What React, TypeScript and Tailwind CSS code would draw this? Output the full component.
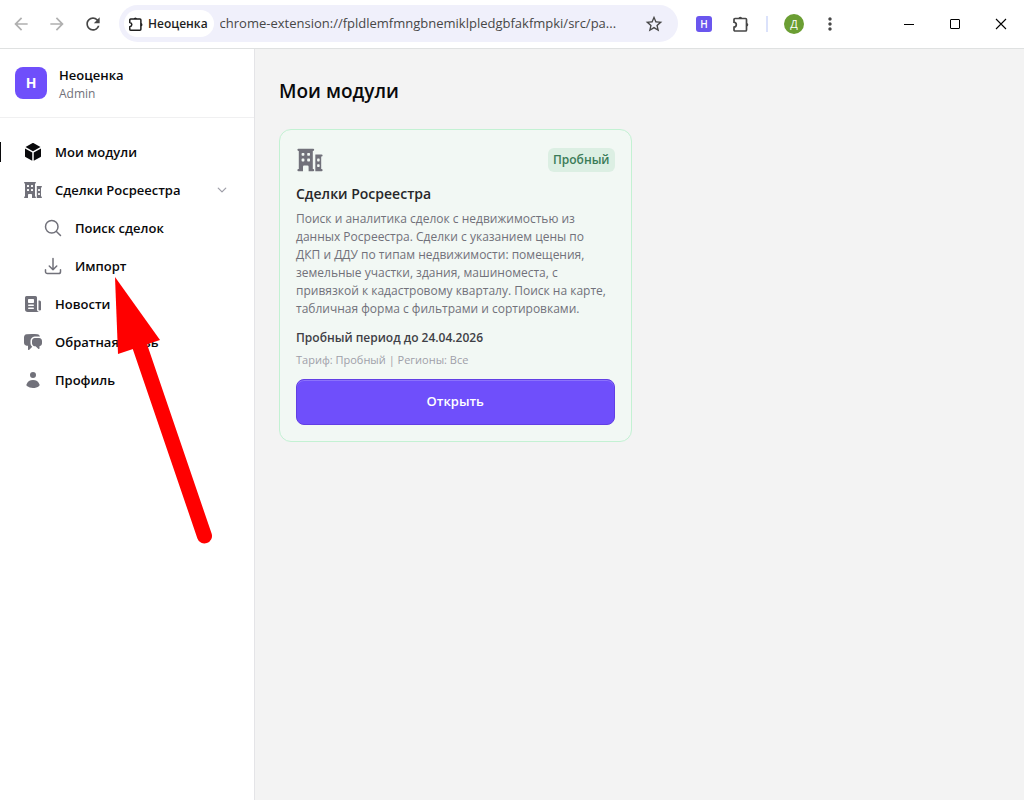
import React, { useState } from 'react'
import {
  HiMiniChatBubbleLeftRight,
  HiMiniCube,
  HiMiniNewspaper,
  HiMiniUser,
  HiOutlineArrowDownTray,
  HiOutlineChevronDown,
  HiOutlineMagnifyingGlass,
} from 'react-icons/hi2'
import { MdArrowBack, MdArrowForward, MdMoreVert, MdRefresh, MdStarBorder } from 'react-icons/md'

function BuildingsIcon({ className }: { className?: string }) {
  return (
    <svg viewBox="0 0 20 20" fill="currentColor" fillRule="evenodd" className={className} aria-hidden="true">
      <path d="M1.750 2h10.500a.75.75 0 0 1 0 1.500H12v13h.25a.75.75 0 0 1 0 1.500H9v-3.250a.75.75 0 0 0-.75-.75h-2.500a.75.75 0 0 0-.75.75V18H1.750a.75.75 0 0 1 0-1.500H2v-13h-.25a.75.75 0 0 1 0-1.500ZM4 5.500v1a.5.5 0 0 0 .5.5h1a.5.5 0 0 0 .5-.5v-1a.5.5 0 0 0-.5-.5h-1a.5.5 0 0 0-.5.5Zm4 0v1a.5.5 0 0 0 .5.5h1a.5.5 0 0 0 .5-.5v-1a.5.5 0 0 0-.5-.5h-1a.5.5 0 0 0-.5.5Zm-4 4v1a.5.5 0 0 0 .5.5h1a.5.5 0 0 0 .5-.5v-1a.5.5 0 0 0-.5-.5h-1a.5.5 0 0 0-.5.5Zm4 0v1a.5.5 0 0 0 .5.5h1a.5.5 0 0 0 .5-.5v-1a.5.5 0 0 0-.5-.5h-1a.5.5 0 0 0-.5.5Z" />
      <path d="M13.800 6h4.450a.75.75 0 0 1 0 1.500H18v9h.25a.75.75 0 0 1 0 1.500H13.800V6Zm1.300 3.500v1a.5.5 0 0 0 .5.5h.8a.5.5 0 0 0 .5-.5v-1a.5.5 0 0 0-.5-.5h-.8a.5.5 0 0 0-.5.5Zm0 4v1a.5.5 0 0 0 .5.5h.8a.5.5 0 0 0 .5-.5v-1a.5.5 0 0 0-.5-.5h-.8a.5.5 0 0 0-.5.5Z" />
    </svg>
  )
}

function PuzzleIcon({ className }: { className?: string }) {
  return (
    <svg viewBox="0 0 18 18" fill="none" className={className} aria-hidden="true">
      <path
        d="M3 3.500h10.500a1 1 0 0 1 1 1V15a1 1 0 0 1-1 1H3a1 1 0 0 1-1-1v-2.800c1.500-.3 2.300-1.200 2.300-2.500S3.500 7.500 2 7.200V4.500a1 1 0 0 1 1-1Z"
        stroke="currentColor"
        strokeWidth="1.700"
      />
      <path d="M6.500 3.500a1.800 1.800 0 0 1 3.600 0ZM14.500 8a1.800 1.800 0 0 1 0 3.600Z" fill="currentColor" />
    </svg>
  )
}

const menu = [
  { id: 'modules', label: 'Мои модули', icon: HiMiniCube },
  {
    id: 'deals',
    label: 'Сделки Росреестра',
    icon: BuildingsIcon,
    children: [
      { id: 'search', label: 'Поиск сделок', icon: HiOutlineMagnifyingGlass },
      { id: 'import', label: 'Импорт', icon: HiOutlineArrowDownTray },
    ],
  },
  { id: 'news', label: 'Новости', icon: HiMiniNewspaper },
  { id: 'feedback', label: 'Обратная связь', icon: HiMiniChatBubbleLeftRight },
  { id: 'profile', label: 'Профиль', icon: HiMiniUser },
]

const modules = [
  {
    id: 'rosreestr',
    title: 'Сделки Росреестра',
    badge: 'Пробный',
    description:
      'Поиск и аналитика сделок с недвижимостью из данных Росреестра. Сделки с указанием цены по ДКП и ДДУ по типам недвижимости: помещения, земельные участки, здания, машиноместа, с привязкой к кадастровому кварталу. Поиск на карте, табличная форма с фильтрами и сортировками.',
    period: 'Пробный период до 24.04.2026',
    tariff: 'Тариф: Пробный | Регионы: Все',
  },
]

function BrowserBar() {
  return (
    <header className="flex h-[49px] shrink-0 items-center border-b border-[#dfe1e1] bg-white pb-px text-[#474747]">
      <div className="flex shrink-0 items-center gap-4 pl-[11px]">
        <button type="button" aria-label="Назад" className="text-[#b0b0b0]">
          <MdArrowBack className="size-5" />
        </button>
        <button type="button" aria-label="Вперёд" className="text-[#b0b0b0]">
          <MdArrowForward className="size-5" />
        </button>
        <button type="button" aria-label="Обновить">
          <MdRefresh className="size-5" />
        </button>
      </div>

      <div className="ml-4 flex h-[37px] min-w-0 flex-1 items-center rounded-full bg-[#f0f0fb] pl-[5px] pr-3.5">
        <span className="flex h-[27px] shrink-0 items-center gap-1 rounded-full bg-white pl-1 pr-1.5 text-xs font-semibold text-[#1f1f1f]">
          <PuzzleIcon className="size-4" />
          Неоценка
        </span>
        <input
          type="text"
          readOnly
          aria-label="Адресная строка"
          value="chrome-extension://fpldlemfmngbnemiklpledgbfakfmpki/src/pa..."
          className="ml-1.5 min-w-0 flex-1 bg-transparent text-[13px] text-[#474747] outline-none"
        />
        <button type="button" aria-label="Добавить в закладки" className="ml-2">
          <MdStarBorder className="size-5" />
        </button>
      </div>

      <div className="ml-[18px] flex shrink-0 items-center">
        <button type="button" aria-label="Неоценка" className="flex size-4 items-center justify-center rounded-[3px] bg-[#6a56ee] text-[10px] font-semibold leading-none text-white">
          Н
        </button>
        <button type="button" aria-label="Расширения" className="ml-5">
          <PuzzleIcon className="size-[18px]" />
        </button>
        <span className="ml-4 h-4 w-0.5 bg-[#dbe2fb]" />
        <button type="button" aria-label="Профиль" className="ml-4 flex size-5 items-center justify-center rounded-full bg-[#6b9e33] text-[11px] leading-none text-white">
          Д
        </button>
        <button type="button" aria-label="Меню" className="ml-4">
          <MdMoreVert className="size-5" />
        </button>
      </div>

      <div className="ml-[46px] flex shrink-0 items-center text-black">
        <button type="button" aria-label="Свернуть" className="flex w-[46px] justify-center">
          <svg viewBox="0 0 12 12" className="size-3" shapeRendering="crispEdges">
            <path d="M1 6.500h10" stroke="currentColor" />
          </svg>
        </button>
        <button type="button" aria-label="Развернуть" className="flex w-[46px] justify-center">
          <svg viewBox="0 0 12 12" className="size-3" fill="none">
            <rect x="1.500" y="1.500" width="9" height="9" rx="0.500" stroke="currentColor" />
          </svg>
        </button>
        <button type="button" aria-label="Закрыть" className="flex w-[46px] justify-center">
          <svg viewBox="0 0 12 12" className="size-3">
            <path d="m1 1 10 10M11 1 1 11" stroke="currentColor" strokeWidth="1.100" />
          </svg>
        </button>
      </div>
    </header>
  )
}

function Sidebar() {
  const [active, setActive] = useState('modules')
  const [open, setOpen] = useState(true)

  const renderItem = (item: any, nested = false) => {
    const Icon = item.icon
    const isActive = item.id === active
    return (
      <li key={item.id}>
        <button
          type="button"
          onClick={() => (item.children ? setOpen(!open) : setActive(item.id))}
          className={`relative flex h-9 w-full items-center gap-3 pr-[26px] text-left text-[13px] font-semibold text-[#09090b] ${nested ? 'pl-[43px]' : 'pl-[23px]'}`}
        >
          {isActive && <span className="absolute left-0 h-5 w-px bg-[#09090b]" />}
          <Icon className={`size-5 shrink-0 ${nested ? 'stroke-[1.8]' : ''} ${isActive ? 'text-[#09090b]' : 'text-[#71717a]'}`} />
          <span className="flex-1 pt-0.5">{item.label}</span>
          {item.children && (
            <HiOutlineChevronDown className={`size-3 stroke-[2.5] text-[#9f9fa9] ${open ? '' : '-rotate-90'}`} />
          )}
        </button>
        {item.children && open && (
          <ul className="mt-0.5 flex flex-col gap-0.5">
            {item.children.map((child: any) => renderItem(child, true))}
          </ul>
        )}
      </li>
    )
  }

  return (
    <aside className="w-[255px] shrink-0 border-r border-[#e4e4e7] bg-white">
      <div className="flex h-[69px] items-center gap-3 border-b border-[#f0f0f1] px-[15px]">
        <span className="flex size-8 items-center justify-center rounded-lg bg-[#6f4ffb] text-sm font-bold text-white">
          Н
        </span>
        <div className="pt-0.5">
          <p className="text-[13px] font-semibold leading-5 text-[#09090b]">Неоценка</p>
          <p className="text-xs leading-[18px] text-[#71717a]">Admin</p>
        </div>
      </div>
      <nav className="py-4">
        <ul className="flex flex-col gap-0.5">{menu.map((item) => renderItem(item))}</ul>
      </nav>
    </aside>
  )
}

function ModuleCard({ title, badge, description, period, tariff }: any) {
  return (
    <article className="flex flex-col rounded-xl border border-[#c3f1d3] bg-[#f2f8f4] p-4">
      <div className="flex items-center justify-between">
        <BuildingsIcon className="size-7 text-[#71717a]" />
        <span className="rounded-md bg-[#dcefe3] px-[5px] text-xs font-semibold leading-6 text-[#3a7b57]">{badge}</span>
      </div>
      <h2 className="mt-2 text-sm font-semibold leading-6 text-[#27272a]">{title}</h2>
      <p className="mt-1 pr-1.5 text-xs leading-[18px] text-[#71717a]">{description}</p>
      <p className="mt-2.5 text-xs font-semibold leading-5 text-[#3f3f46]">{period}</p>
      <p className="mt-0.5 text-[11px] leading-5 text-[#9f9fa9]">{tariff}</p>
      <button
        type="button"
        className="mt-[9px] h-[46px] rounded-lg border border-[#623fe4] bg-[#6f4ffb] text-[13px] font-semibold text-white shadow-[inset_0_1px_0_rgba(255,255,255,0.2)]"
      >
        Открыть
      </button>
    </article>
  )
}

// Красная стрелка-указатель на пункт «Импорт»
function PointerArrow() {
  return (
    <svg viewBox="0 0 100 270" className="pointer-events-none absolute left-[113px] top-[276px] h-[270px] w-[100px]" aria-hidden="true">
      <path d="M2 1 47 64 5 78Z" fill="#ff0000" />
      <path d="M26 68 91.500 260" stroke="#ff0000" strokeWidth="15" strokeLinecap="round" />
    </svg>
  )
}

export default function App() {
  return (
    <div className="relative flex min-h-screen flex-col bg-[#f3f3f3] font-['Open_Sans','Noto_Sans',sans-serif]">
      <BrowserBar />
      <div className="flex flex-1">
        <Sidebar />
        <main className="min-w-0 flex-1 p-6">
          <h1 className="mt-0.5 text-[19px] font-semibold leading-8 text-[#09090b]">Мои модули</h1>
          <div className="mt-[22px] grid grid-cols-2 items-start gap-4">
            {modules.map((m) => (
              <ModuleCard key={m.id} {...m} />
            ))}
          </div>
        </main>
      </div>
      <PointerArrow />
    </div>
  )
}
